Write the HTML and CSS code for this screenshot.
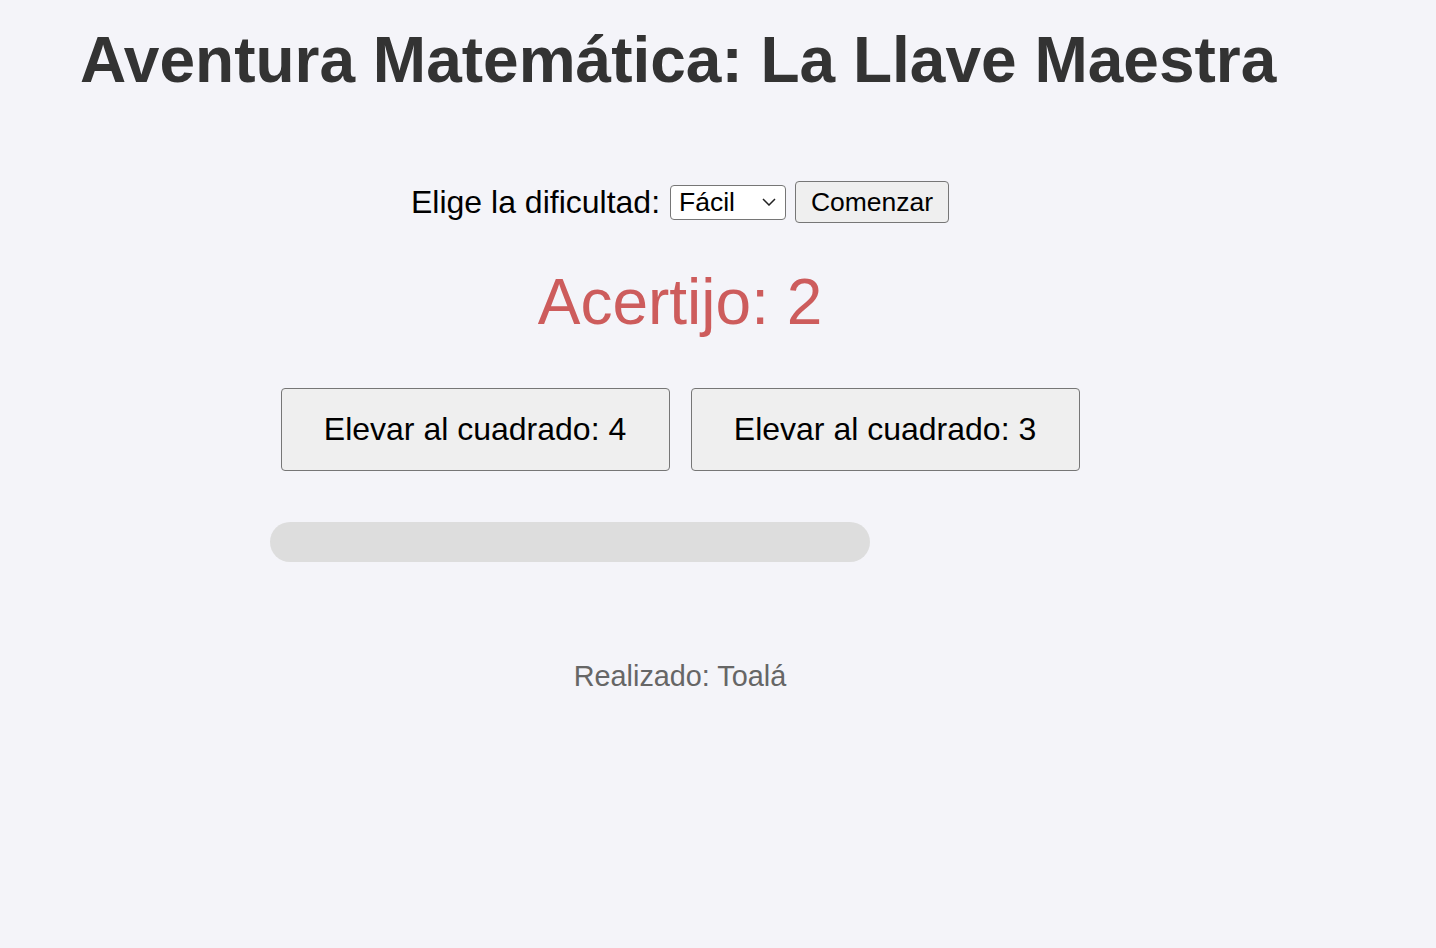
FILE: index.html
```html
<!DOCTYPE html>
<html lang="es">
<head>
<meta charset="utf-8">
<title>Aventura Matemática: La Llave Maestra</title>
<link rel="stylesheet" href="styles.css">
</head>
<body>
<main class="page">
  <h1 class="title">Aventura Matemática: La Llave Maestra</h1>
  <div class="game">
    <div class="controls">
      <label class="controls-label" for="dificultad">Elige la dificultad:</label>
      <div class="select">
        <span class="select-value">Fácil</span>
        <svg class="select-arrow" viewBox="0 0 14 8" width="14" height="8"><path d="M1 1 L7 7 L13 1" fill="none" stroke="#222" stroke-width="1.5"/></svg>
      </div>
      <button class="btn-start" type="button">Comenzar</button>
    </div>
    <div class="riddle">Acertijo: 2</div>
    <div class="options">
      <button class="option" type="button">Elevar al cuadrado: 4</button>
      <button class="option" type="button">Elevar al cuadrado: 3</button>
    </div>
    <div class="progress-wrap">
      <div class="progress"><div class="progress-fill" style="width:0%"></div></div>
    </div>
    <p class="credit">Realizado: Toalá</p>
  </div>
</main>
</body>
</html>
```

FILE: styles.css
```css
html, body {
  margin: 0;
  padding: 0;
  background: #f4f4f9;
}

body {
  font-family: "Liberation Sans", Arial, Helvetica, sans-serif;
  color: #000;
}

.page {
  width: 1200px;
  margin-left: 80px;
  padding-top: 23px;
}

.title {
  margin: 0;
  font-size: 64px;
  line-height: 74px;
  font-weight: 700;
  color: #333;
}

.game {
  display: flex;
  flex-direction: column;
  align-items: center;
}

.controls {
  display: flex;
  align-items: center;
  margin-top: 84px;
  height: 42px;
}

.controls-label {
  font-size: 32px;
  line-height: 37px;
  margin-right: 10px;
}

.select {
  box-sizing: border-box;
  width: 116px;
  height: 35px;
  border: 1px solid #767676;
  border-radius: 4px;
  background: #fff;
  display: flex;
  align-items: center;
  justify-content: space-between;
  padding: 0 9px 0 8px;
  font-size: 26.5px;
  margin-right: 9px;
}

.select-value {
  line-height: 30px;
}

.select-arrow {
  display: block;
}

.btn-start {
  box-sizing: border-box;
  width: 154px;
  height: 42px;
  font-family: inherit;
  font-size: 26.5px;
  color: #000;
  background: #efefef;
  border: 1px solid #767676;
  border-radius: 4px;
  padding: 0;
}

.riddle {
  margin-top: 42px;
  font-size: 64px;
  line-height: 74px;
  color: #cd5c5c;
}

.options {
  display: flex;
  gap: 21px;
  margin-top: 49px;
}

.option {
  box-sizing: border-box;
  width: 389px;
  height: 83px;
  font-family: inherit;
  font-size: 32px;
  color: #000;
  background: #efefef;
  border: 1px solid #767676;
  border-radius: 4px;
  padding: 0;
}

.progress-wrap {
  width: 820px;
  margin-top: 51px;
}

.progress {
  width: 600px;
  height: 40px;
  border-radius: 20px;
  background: #ddd;
  overflow: hidden;
}

.progress-fill {
  height: 100%;
  background: #4caf50;
}

.credit {
  margin: 98px 0 0;
  font-size: 28.8px;
  line-height: 33px;
  color: #666;
}
```
